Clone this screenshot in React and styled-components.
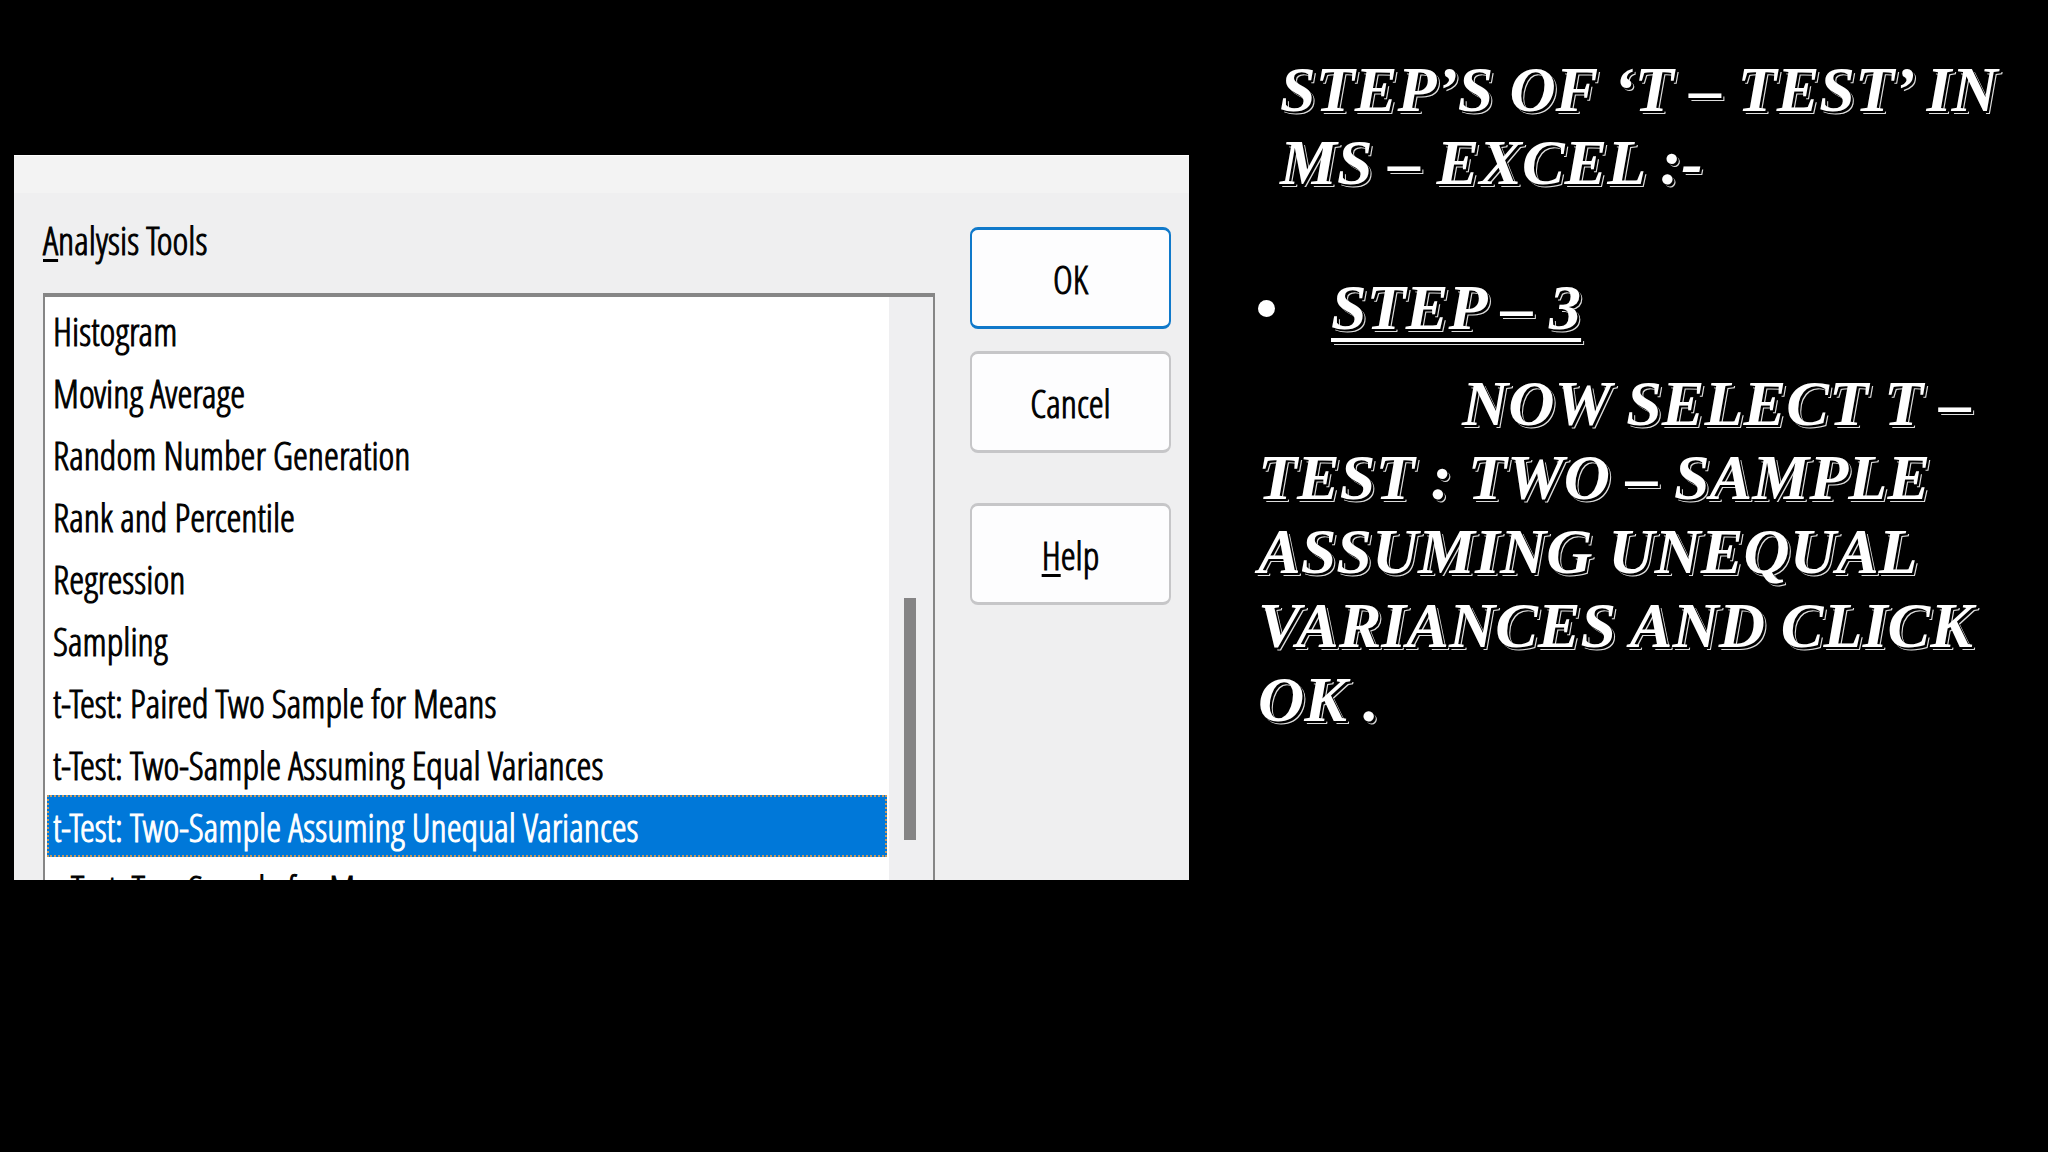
import React from 'react';
import styled, { createGlobalStyle } from 'styled-components';

const GlobalStyle = createGlobalStyle`
  * { box-sizing: border-box; }
  body { margin: 0; background: #000; }
`;

const Slide = styled.main`
  display: grid;
  grid-template-columns: minmax(0, 1175fr) minmax(0, 859fr);
  align-items: start;
  min-height: 100vh;
  padding-left: 14px;
  background: #000;
`;

const Dialog = styled.section`
  display: grid;
  grid-template-columns: minmax(0, 1fr) 201px;
  column-gap: 35px;
  height: 725px;
  margin-top: 155px;
  padding: 0 18px 0 29px;
  overflow: hidden;
  background: linear-gradient(#f3f3f3 0 37px, #efeff0 37px);
  border-top: 1px solid #fff;
  color: #000;
  font-family: 'Open Sans Condensed Light', 'Liberation Sans Narrow', 'Open Sans', sans-serif;
  font-size: 38px;
  font-weight: 400;
  -webkit-text-stroke: 1px currentColor;
`;

const Field = styled.div`
  display: flex;
  flex-direction: column;
  min-width: 0;
`;

const FieldLabel = styled.label`
  padding-top: 62px;
  line-height: 44px;
  margin-bottom: 31px;
`;

const Key = styled.span`
  text-decoration: underline;
  text-decoration-thickness: 3px;
  text-underline-offset: 4px;
`;

const ListFrame = styled.div`
  display: flex;
  background: #fff;
  border: 2px solid #868686;
  border-top-width: 4px;
  border-bottom: 0;
`;

const ToolList = styled.select`
  appearance: none;
  flex: 1;
  min-width: 0;
  height: 640px;
  margin: 0;
  padding: 2px 2px 0;
  overflow: hidden;
  background: #fff;
  border: 0;
  outline: 0;
  color: #000;
  font: inherit;
`;

const Tool = styled.option`
  height: 62px;
  min-height: 62px;
  padding: 6px 6px 0;
  color: #000;

  &:checked {
    padding: 4px 4px 0;
    background: linear-gradient(#0078d9, #0078d9);
    border: 2px dotted #c49a62;
    color: #fff !important;
  }
`;

const ScrollTrack = styled.div`
  display: flex;
  justify-content: center;
  width: 44px;
  padding-right: 2px;
  padding-top: 301px;
  background: #efeff1;
`;

const ScrollThumb = styled.div`
  width: 12px;
  height: 242px;
  background: #858485;
`;

const Actions = styled.div`
  display: flex;
  flex-direction: column;
  gap: 22px;
  padding-top: 71px;
`;

const Button = styled.button`
  height: 102px;
  margin-top: ${(p) => (p.$apart ? 28 : 0)}px;
  padding: 2px 0 0;
  background: #fdfdfe;
  border: 2px solid ${(p) => (p.$primary ? '#1079ca' : '#c6c6c8')};
  border-top-width: 3px;
  border-bottom-width: 3px;
  border-radius: 8px;
  color: #000;
  font: inherit;
`;

const Lesson = styled.article`
  padding: 53px 16px 0 69px;
  color: #fff;
  font-family: 'Liberation Serif', serif;
  font-size: 64px;
  font-style: italic;
  font-weight: 700;
  line-height: 74px;
  text-shadow: 2px 2px 0 #000, 3px 3px 0 #ddd;
  white-space: nowrap;
`;

const Title = styled.h1`
  margin: 0 0 72px;
  padding-left: 22px;
  font-size: inherit;
  line-height: 73px;
`;

const Steps = styled.ul`
  margin: 0;
  padding: 0;
  list-style: none;
`;

const Step = styled.li`
  display: flex;
  align-items: center;
  gap: 56px;
  margin-bottom: 22px;
`;

const Bullet = styled.span`
  width: 17px;
  height: 17px;
  border-radius: 50%;
  background: #fff;
`;

const StepName = styled.span`
  text-decoration: underline;
  text-decoration-thickness: 4px;
  text-decoration-skip-ink: none;
  text-underline-offset: 9px;
`;

const Body = styled.p`
  margin: 0;
  text-indent: 204px;
`;

const TOOLS = [
  'Histogram',
  'Moving Average',
  'Random Number Generation',
  'Rank and Percentile',
  'Regression',
  'Sampling',
  't-Test: Paired Two Sample for Means',
  't-Test: Two-Sample Assuming Equal Variances',
  't-Test: Two-Sample Assuming Unequal Variances',
  'z-Test: Two Sample for Means',
];

export default function App() {
  return (
    <>
      <GlobalStyle />
      <Slide>
        <Dialog>
          <Field>
            <FieldLabel htmlFor="tools"><Key>A</Key>nalysis Tools</FieldLabel>
            <ListFrame>
              <ToolList id="tools" size={10} defaultValue={TOOLS[8]}>
                {TOOLS.map((name) => <Tool key={name} value={name}>{name}</Tool>)}
              </ToolList>
              <ScrollTrack><ScrollThumb /></ScrollTrack>
            </ListFrame>
          </Field>
          <Actions>
            <Button type="button" $primary>OK</Button>
            <Button type="button">Cancel</Button>
            <Button type="button" $apart><Key>H</Key>elp</Button>
          </Actions>
        </Dialog>
        <Lesson>
          <Title>STEP’S OF ‘T – TEST’ IN<br />MS – EXCEL :-</Title>
          <Steps>
            <Step><Bullet /><StepName>STEP – 3</StepName></Step>
          </Steps>
          <Body>
            NOW SELECT T –<br />TEST : TWO – SAMPLE<br />ASSUMING UNEQUAL<br />VARIANCES AND CLICK<br />OK .
          </Body>
        </Lesson>
      </Slide>
    </>
  );
}
